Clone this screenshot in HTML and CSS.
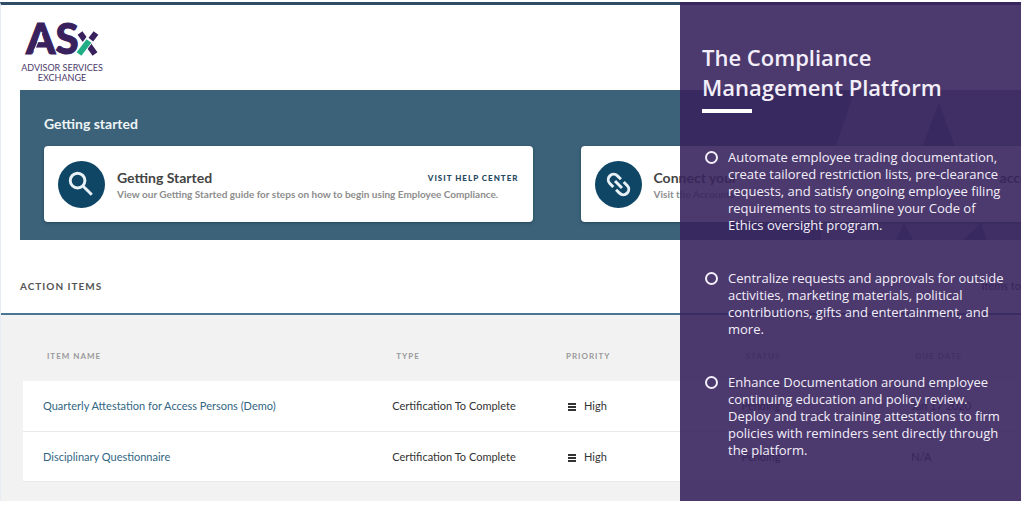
FILE: index.html
```html
<!DOCTYPE html>
<html lang="en">
<head>
<meta charset="utf-8">
<title>ASx Advisor Services Exchange</title>
<link rel="stylesheet" href="styles.css">
</head>
<body>
<div class="stage">
  <main class="app">
    <header class="brand">
      <svg class="brand-mark" viewBox="0 0 76 36" role="img" aria-label="ASx">
        <text class="mark-caps" x="2" y="33">AS</text>
        <path class="mark-cut" d="M10 30 L18 11"/>
        <path class="mark-x" d="M56 12 L71 33 M65 21 L72 12"/>
        <path class="mark-halo" d="M54 34 L66 18"/>
        <path class="mark-green" d="M55 33 L65 20"/>
      </svg>
      <div class="brand-name">ADVISOR SERVICES<br>EXCHANGE</div>
    </header>

    <section class="banner">
      <svg class="watermark" viewBox="0 0 200 150" aria-hidden="true">
        <path class="wm-light" d="M34 0 H200 V150 H0 V100 Z"/>
        <path class="wm-dark" d="M118 12 L135 60 H100 Z M75 150 L83 133 L92 150 Z M142 150 L160 133 L166 150 Z"/>
      </svg>
      <h2 class="banner-title">Getting started</h2>
      <div class="cards">
        <article class="card">
          <svg class="card-icon" viewBox="0 0 48 48" aria-hidden="true">
            <circle class="disc" cx="24" cy="24" r="24"/>
            <circle class="stroke" cx="20" cy="20" r="7.5"/>
            <path class="stroke" d="M25.5 25.5 L34.5 34.5"/>
          </svg>
          <div class="card-body">
            <div class="card-head"><h3>Getting Started</h3><a class="card-link" href="#">VISIT HELP CENTER</a></div>
            <p>View our Getting Started guide for steps on how to begin using Employee Compliance.</p>
          </div>
        </article>
        <article class="card">
          <svg class="card-icon" viewBox="0 0 48 48" aria-hidden="true">
            <circle class="disc" cx="24" cy="24" r="24"/>
            <g transform="rotate(45 24 24)">
              <path class="stroke" d="M22 18.5 H17 a5.5 5.5 0 0 0 0 11 H22 M26 18.5 H31 a5.5 5.5 0 0 1 0 11 H26 M19 24 H29"/>
            </g>
          </svg>
          <div class="card-body">
            <div class="card-head"><h3>Connect your</h3><h3>accounts</h3></div>
            <p>Visit the Accounts</p>
          </div>
        </article>
      </div>
    </section>

    <div class="section-bar"><h2>ACTION ITEMS</h2><span>Items to</span></div>

    <section class="items">
      <table class="table">
        <thead><tr><th class="c-name">ITEM NAME</th><th class="c-type">TYPE</th><th class="c-prio">PRIORITY</th><th class="c-stat">STATUS</th><th>DUE DATE</th></tr></thead>
        <tbody>
          <tr><td><a href="#">Quarterly Attestation for Access Persons (Demo)</a></td><td>Certification To Complete</td><td><span class="bars"></span>High</td><td>Pending</td><td>Jan 17 2020</td></tr>
          <tr><td><a href="#">Disciplinary Questionnaire</a></td><td>Certification To Complete</td><td><span class="bars"></span>High</td><td>Pending</td><td>N/A</td></tr>
        </tbody>
      </table>
    </section>
  </main>

  <aside class="panel">
    <h1>The Compliance<br>Management Platform</h1>
    <ul>
      <li>Automate employee trading documentation, create tailored restriction lists, pre-clearance requests, and satisfy ongoing employee filing requirements to streamline your Code of Ethics oversight program.</li>
      <li>Centralize requests and approvals for outside activities, marketing materials, political contributions, gifts and entertainment, and more.</li>
      <li>Enhance Documentation around employee continuing education and policy review. Deploy and track training attestations to firm policies with reminders sent directly through the platform.</li>
    </ul>
  </aside>
</div>
</body>
</html>
```
FILE: styles.css
```css
*, *::before, *::after { box-sizing: border-box; }
body { margin: 0; background: #fff; font-family: Lato, sans-serif; color: #333; }
h1, h2, h3, p, ul { margin: 0; padding: 0; }
a { text-decoration: none; }

.stage { position: relative; margin: 2px 3px 0 0; overflow: hidden; }
.app { border-top: 3px solid #2f4d66; border-left: 1px solid #e6ecf2; }

.brand { display: flex; flex-direction: column; align-items: center; width: 84px; margin-left: 19px; padding-top: 16px; height: 85px; }
.brand-mark { width: 76px; height: 36px; overflow: visible; }
.mark-caps { font: 900 42px Lato, sans-serif; fill: #38215c; stroke: #38215c; stroke-width: 1; }
.mark-cut { stroke: #fff; stroke-width: 1; fill: none; }
.mark-x { stroke: #38215c; stroke-width: 6; fill: none; }
.mark-halo { stroke: #fff; stroke-width: 8; fill: none; }
.mark-green { stroke: #1fae85; stroke-width: 6; fill: none; }
.brand-name { margin-top: 6px; font-size: 9px; line-height: 10px; text-align: center; white-space: nowrap; color: #4c3a6b; }

.banner { position: relative; overflow: hidden; margin-left: 19px; padding: 24px 0 18px 24px; background: #3b6278; }
.watermark { position: absolute; right: 0; top: 0; width: 200px; height: 150px; }
.wm-light { fill: #7899ac; }
.wm-dark { fill: #3b6278; }
.banner-title { position: relative; font-size: 14px; line-height: 20px; font-weight: 700; color: #eef4f7; }
.cards { position: relative; display: flex; gap: 48px; margin-top: 12px; }
.card { flex: 0 0 50%; display: flex; align-items: center; gap: 12px; height: 76px; padding: 0 14px; border-radius: 4px; background: #fff; box-shadow: 0 1px 3px #24485c; }
.card-icon { flex: none; width: 47px; height: 47px; }
.disc { fill: #0f4565; }
.stroke { fill: none; stroke: #e8f1f6; stroke-width: 3; }
.card-body { flex: 1; white-space: nowrap; }
.card-head { display: flex; justify-content: space-between; align-items: center; }
.card h3 { font-size: 14px; line-height: 20px; color: #444; }
.card p { font-size: 10px; line-height: 13px; font-weight: 700; color: #8d8d8d; }
.card-link { font-size: 8px; font-weight: 900; letter-spacing: 1px; color: #24485f; }

.section-bar { display: flex; justify-content: space-between; align-items: center; height: 75px; padding: 18px 0 0 19px; border-bottom: 2px solid #4a7593; font-size: 11px; }
.section-bar h2 { font-size: 10px; font-weight: 700; letter-spacing: 1px; color: #555; }

.items { padding: 16px 0 19px 22px; background: #f2f2f2; }
.table { width: 100%; border-collapse: collapse; table-layout: fixed; text-align: left; }
.table th { height: 50px; padding: 0 0 0 24px; font-size: 8px; letter-spacing: 1px; color: #999; }
.table td { height: 50px; padding: 0 0 0 20px; background: #fff; border-bottom: 1px solid #e9e9ec; font-size: 11px; }
.table a { color: #326684; }
.c-name { width: 35%; }
.c-type { width: 17%; }
.c-prio { width: 18%; }
.c-stat { width: 17%; }
.bars { display: inline-block; width: 8px; height: 8px; margin: 0 8px 0 6px; vertical-align: -1px; background: repeating-linear-gradient(#333 0 2px, transparent 2px 3px); }

.panel { position: absolute; top: 0; right: 0; bottom: 0; width: 341px; padding: 40px 14px 0 22px; background: rgba(56, 36, 93, 0.9); color: #f3effa; font-family: "Open Sans", sans-serif; }
.panel h1 { font-size: 22px; line-height: 30px; font-weight: 600; }
.panel h1::after { content: ""; display: block; width: 50px; height: 4px; margin-top: 7px; background: #fff; }
.panel ul { display: grid; gap: 36px; margin-top: 36px; list-style: none; }
.panel li { position: relative; padding-left: 26px; font-size: 13px; line-height: 17px; }
.panel li::before { content: ""; position: absolute; left: 3px; top: 2px; width: 13px; height: 13px; border: 2px solid #f3effa; border-radius: 50%; }
```
